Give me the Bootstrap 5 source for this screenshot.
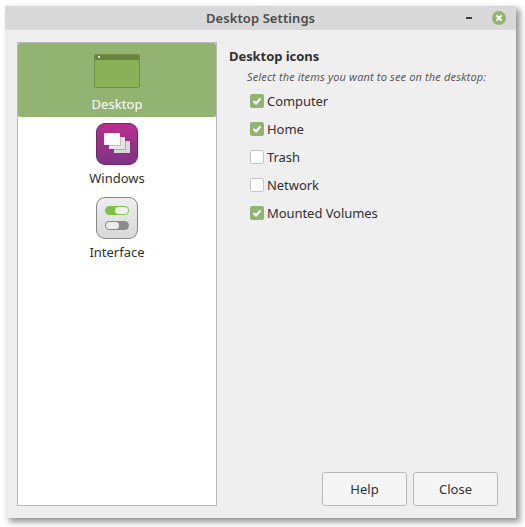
<!DOCTYPE html>
<html lang="en">
<head>
<meta charset="utf-8">
<meta name="viewport" content="width=device-width, initial-scale=1">
<title>Desktop Settings</title>
<link href="https://cdn.jsdelivr.net/npm/bootstrap@5.3.0/dist/css/bootstrap.min.css" rel="stylesheet">
<style>
body{font-family:"Noto Sans","Open Sans",sans-serif;font-size:13px;line-height:18px;color:#303030;background:#fff;padding:5px 9px 9px 5px;height:527px;overflow:hidden}
.win{width:511px;height:513px;background:#efefef;box-shadow:4px 4px 6px rgba(0,0,0,.42)}
.titlebar{height:25px;background:#d9d9d9;border-top:1px solid #eee;color:#4a4a4a;font-weight:600}
.titlebar .caption{width:109px;margin-left:201px;letter-spacing:.08px}
.controls{margin-right:10px;gap:19px}
.content-area{padding:12px 18px 12px 12px;gap:12px}
.sidebar{width:200px;background:#fff;border:1px solid #b8b8b8}
.pane{height:74px;padding-top:6px}
.pane.selected{background:#92b372;color:#fff;border-radius:2px}
.pane.selected span{letter-spacing:.1px}
.pane svg{display:block;margin-bottom:4px}
.heading{font-size:13px;line-height:18px;font-weight:700;margin:5px 0 0;letter-spacing:-.06px}
.hint{font-size:11px;line-height:16px;font-style:italic;color:#5a5a5a;margin:4px 0 2px 18px;letter-spacing:.145px}
.choice{height:28px;padding-left:21px;gap:3px}
.choice>span:last-child{letter-spacing:-.06px}
.choice .form-check-input{width:14px;height:14px;margin:0;border:1px solid #c6c6c6;border-radius:2px;background-color:#fff;flex:none}
.choice .form-check-input:checked{background-color:#92b372;border-color:#92b372;background-image:none}
.tick{display:grid}
.tick>*{grid-area:1/1}
.tick svg{pointer-events:none;z-index:1}
.action{width:85px;height:34px;font-size:13px;line-height:18px;padding:0;background:#f5f5f5;border:1px solid #b9b9b9;border-radius:3px;color:#303030}
.actions{gap:6px}
</style>
<script src="https://cdn.jsdelivr.net/npm/bootstrap@5.3.0/dist/js/bootstrap.bundle.min.js"></script>
</head>
<body>
<main class="win d-flex flex-column">
  <header class="titlebar d-flex align-items-center justify-content-between flex-shrink-0">
    <span class="caption text-nowrap"><span>Desktop Settings</span></span>
    <div class="controls d-flex align-items-center">
      <svg width="7" height="14"><path d="M0 6h6v2H0z" fill="#3c3c3c"/></svg>
      <svg width="14" height="14"><circle cx="7" cy="7" r="7" fill="#92b372"/><path d="M4.4 4.4l5.2 5.2M9.6 4.4L4.4 9.6" stroke="#fff" stroke-width="2"/></svg>
    </div>
  </header>
  <div class="content-area d-flex flex-grow-1">
    <nav class="sidebar flex-shrink-0">
      <div class="pane selected d-flex flex-column align-items-center">
        <svg width="46" height="42"><rect x=".5" y="5.5" width="45" height="33" rx="1" fill="#8bb158" stroke="#6f9048"/><path d="M1 6h44v5H1z" fill="#66833f"/><path d="M4 7h2v2H4z" fill="#e4eadc"/></svg>
        <span>Desktop</span>
      </div>
      <div class="pane d-flex flex-column align-items-center">
        <svg width="42" height="42"><defs><linearGradient id="plum" x2="0" y2="1"><stop stop-color="#bd2e91"/><stop offset="1" stop-color="#793483"/></linearGradient></defs><rect x=".5" y=".5" width="41" height="41" rx="8.5" fill="url(#plum)" stroke="#762568"/><path d="M18 18h17v13H18z" fill="#8b246f" opacity=".5"/><path d="M18 18h16v12H18z" fill="#d9d9d9"/><path d="M13 14h17v13H13z" fill="#8b246f" opacity=".35"/><path d="M13 14h16v12H13z" fill="#e6e6e6"/><path d="M8 10h17v13H8z" fill="#8b246f" opacity=".25"/><path d="M8 10h16v12H8z" fill="#fff"/></svg>
        <span>Windows</span>
      </div>
      <div class="pane d-flex flex-column align-items-center">
        <svg width="42" height="42"><defs><linearGradient id="silver" x2="0" y2="1"><stop stop-color="#eee"/><stop offset="1" stop-color="#d8d8d8"/></linearGradient></defs><rect x=".5" y=".5" width="41" height="41" rx="8.5" fill="url(#silver)" stroke="#858585"/><rect x="9" y="9" width="24" height="9" rx="4.5" fill="#7fc142"/><rect x="19" y="10" width="13" height="7" rx="3.5" fill="#f0f0f0"/><rect x="9" y="24" width="24" height="9" rx="4.5" fill="#8c8c8c"/><rect x="10" y="25" width="13" height="7" rx="3.5" fill="#ececec"/></svg>
        <span>Interface</span>
      </div>
    </nav>
    <section class="d-flex flex-column flex-grow-1">
      <h1 class="heading"><span>Desktop icons</span></h1>
      <p class="hint text-nowrap"><span>Select the items you want to see on the desktop:</span></p>
      <label class="choice d-flex align-items-center"><span class="tick"><input class="form-check-input" type="checkbox" checked><svg width="14" height="14"><path d="M3.5 7l2.5 2.5 4.5-5" fill="none" stroke="#fff" stroke-width="2"/></svg></span><span>Computer</span></label>
      <label class="choice d-flex align-items-center"><span class="tick"><input class="form-check-input" type="checkbox" checked><svg width="14" height="14"><path d="M3.5 7l2.5 2.5 4.5-5" fill="none" stroke="#fff" stroke-width="2"/></svg></span><span>Home</span></label>
      <label class="choice d-flex align-items-center"><input class="form-check-input" type="checkbox"><span>Trash</span></label>
      <label class="choice d-flex align-items-center"><input class="form-check-input" type="checkbox"><span>Network</span></label>
      <label class="choice d-flex align-items-center"><span class="tick"><input class="form-check-input" type="checkbox" checked><svg width="14" height="14"><path d="M3.5 7l2.5 2.5 4.5-5" fill="none" stroke="#fff" stroke-width="2"/></svg></span><span>Mounted Volumes</span></label>
      <footer class="actions d-flex justify-content-end mt-auto">
        <button class="btn action" type="button">Help</button>
        <button class="btn action" type="button">Close</button>
      </footer>
    </section>
  </div>
</main>
</body>
</html>
